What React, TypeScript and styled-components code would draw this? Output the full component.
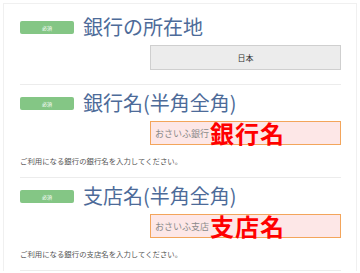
import styled, { createGlobalStyle } from 'styled-components';

const GlobalStyle = createGlobalStyle`
  html, body {
    margin: 0;
    padding: 0;
    background: #ffffff;
  }
  body {
    font-family: "Noto Sans CJK JP", "Noto Sans", sans-serif;
  }
`;

interface Field {
  title: string;
  kind: 'select' | 'text';
  value: string;
  placeholder?: string;
  note?: string;
  help?: string;
}

const fields: Array<Field> = [
  { title: '銀行の所在地', kind: 'select', value: '日本' },
  {
    title: '銀行名(半角全角)',
    kind: 'text',
    value: '',
    placeholder: 'おさいふ銀行',
    note: '銀行名',
    help: 'ご利用になる銀行の銀行名を入力してください。',
  },
  {
    title: '支店名(半角全角)',
    kind: 'text',
    value: '',
    placeholder: 'おさいふ支店',
    note: '支店名',
    help: 'ご利用になる銀行の支店名を入力してください。',
  },
];

export default function App() {
  return (
    <>
      <GlobalStyle />
      <Page>
        <Card>
          {fields.map((field, i) => (
            <Section key={field.title} $first={i === 0} $hasHelp={field.help != null}>
              <Header>
                <RequiredBadge>必須</RequiredBadge>
                <FieldTitle>{field.title}</FieldTitle>
              </Header>
              {field.kind === 'select' ? (
                <SelectBox $first={i === 0}>{field.value}</SelectBox>
              ) : (
                <TextBox>
                  <Placeholder>{field.placeholder}</Placeholder>
                  <Annotation>{field.note}</Annotation>
                </TextBox>
              )}
              {field.help && <HelpText>{field.help}</HelpText>}
            </Section>
          ))}
        </Card>
      </Page>
    </>
  );
}

const Page = styled.div`
  width: 360px;
  height: 273px;
  padding: 3px 3px 0 3px;
  box-sizing: border-box;
  overflow: hidden;
`;

const Card = styled.div`
  border: 1px solid #f0f0f0;
  border-bottom: none;
  padding: 0 15px 0 16px;
  background: #ffffff;
`;

interface SectionProps {
  $first: boolean;
  $hasHelp: boolean;
}

const Section = styled.div<SectionProps>`
  padding-top: ${({ $first }) => ($first ? '11px' : '6px')};
  padding-bottom: ${({ $hasHelp }) => ($hasHelp ? '10px' : '14px')};
  border-bottom: 1px solid #ececec;
`;

const Header = styled.div`
  display: flex;
  align-items: center;
  gap: 9px;
  height: 24px;
`;

const RequiredBadge = styled.span`
  flex: 0 0 auto;
  width: 54px;
  height: 13px;
  border-radius: 2px;
  background-color: #84c685;
  color: #ffffff;
  font-size: 5px;
  line-height: 13px;
  text-align: center;
`;

const FieldTitle = styled.div`
  color: #4d6b99;
  font-size: 20px;
  line-height: 24px;
  white-space: nowrap;
`;

const SelectBox = styled.div<{ $first: boolean }>`
  margin: 6px 0 0 130px;
  height: ${({ $first }) => ($first ? '25px' : '24px')};
  box-sizing: border-box;
  border: 1px solid #cfcfcf;
  background-color: #ececec;
  color: #333333;
  font-size: 8px;
  line-height: 23px;
  text-align: center;
`;

const TextBox = styled.div`
  display: flex;
  align-items: center;
  margin: 6px 0 0 130px;
  height: 24px;
  box-sizing: border-box;
  padding-left: 4px;
  border: 1px solid #f3a55b;
  background-color: #fde7e7;
  overflow: visible;
`;

const Placeholder = styled.span`
  color: #8a8a8a;
  font-size: 9px;
  white-space: nowrap;
`;

const Annotation = styled.span`
  margin-left: 1px;
  color: #ff0000;
  font-size: 24px;
  font-weight: 700;
  line-height: 22px;
  letter-spacing: 1px;
  white-space: nowrap;
`;

const HelpText = styled.div`
  margin-top: 10px;
  color: #555555;
  font-size: 7.4px;
  line-height: 12px;
  white-space: nowrap;
`;
